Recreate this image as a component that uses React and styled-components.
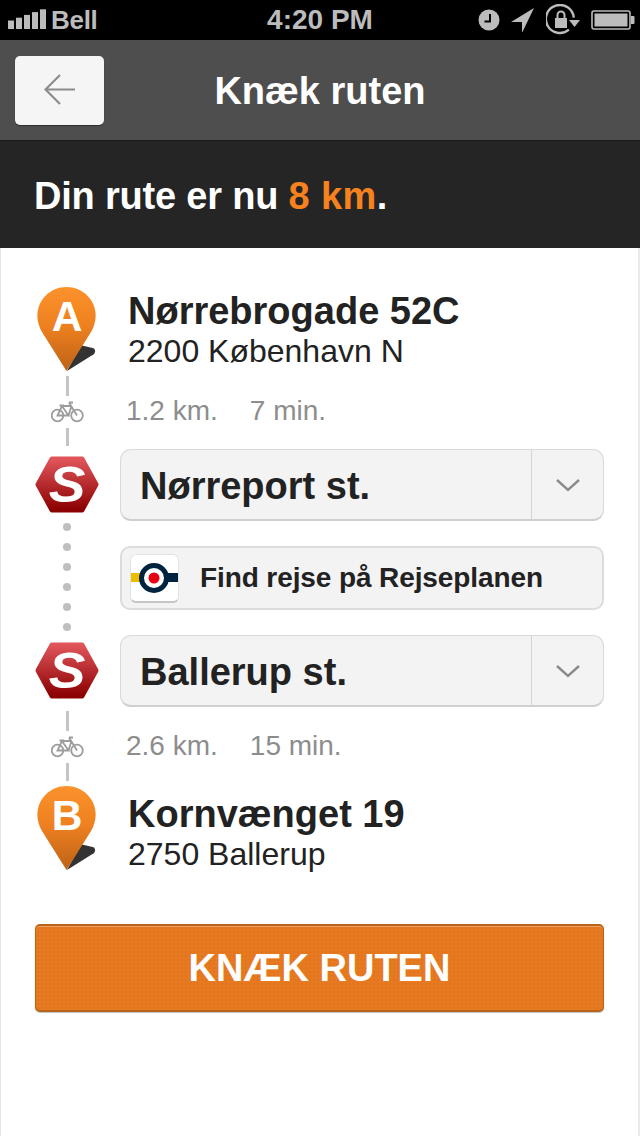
import React from "react";
import styled, { createGlobalStyle } from "styled-components";

const GlobalStyle = createGlobalStyle`
  html, body { margin: 0; padding: 0; background: #fff; }
  body { font-family: "Liberation Sans", Arial, sans-serif; }
  * { box-sizing: border-box; }
`;

const Page = styled.div`
  width: 640px;
  height: 1136px;
  overflow: hidden;
  display: flex;
  flex-direction: column;
`;

const StatusBar = styled.div`
  height: 40px;
  background: #000;
  color: #bcbcbc;
  display: grid;
  grid-template-columns: 1fr auto 1fr;
  align-items: center;
  padding: 0 5px;
`;
const Carrier = styled.div`
  display: flex;
  align-items: center;
  gap: 5px;
  padding-left: 3px;
  font-size: 26px;
  font-weight: bold;
  letter-spacing: -0.3px;
`;
const Clock = styled.div`
  font-size: 28px;
  font-weight: bold;
`;
const StatusIcons = styled.div`
  display: flex;
  justify-content: flex-end;
  align-items: center;
  gap: 11px;
`;

const NavBar = styled.div`
  height: 100px;
  background: #4e4e4e;
  display: grid;
  grid-template-columns: 1fr auto 1fr;
  align-items: center;
  padding: 0 15px;
`;
const BackButton = styled.div`
  width: 89px;
  height: 69px;
  border-radius: 5px;
  background: #f5f5f5;
  box-shadow: 0 1px 1px rgba(0, 0, 0, 0.4);
  display: flex;
  align-items: center;
  justify-content: center;
`;
const NavTitle = styled.div`
  color: #fff;
  font-size: 38px;
  font-weight: bold;
  padding-top: 3px;
`;

const Summary = styled.div`
  height: 108px;
  background: #252525;
  border-top: 1px solid #1b1b1b;
  color: #fff;
  font-size: 38px;
  font-weight: bold;
  letter-spacing: -0.2px;
  display: flex;
  align-items: center;
  padding: 4px 0 0 34px;
  white-space: pre;
`;
const Accent = styled.span`
  color: #f5821f;
  letter-spacing: 0.4px;
`;

const Route = styled.div`
  flex: 1;
  display: flex;
  flex-direction: column;
  padding: 39px 34px 0 34px;
  border-left: 1px solid #e6e6e6;
  border-right: 2px solid #e9e9e9;
`;
const Row = styled.div`
  display: flex;
  align-items: ${(p) => (p.$top ? "flex-start" : "center")};
  height: ${(p) => p.$height}px;
  margin-top: ${(p) => p.$mt || 0}px;
`;
const Rail = styled.div`
  width: 64px;
  flex: none;
  display: flex;
  flex-direction: column;
  align-items: center;
  align-self: stretch;
  justify-content: ${(p) => p.$justify || "center"};
  padding: ${(p) => p.$pad || 0};
  margin-right: 21px;
`;
const PinRail = styled(Rail)`
  margin-right: 29px;
`;
const Address = styled.div`
  color: #222;
  padding-top: ${(p) => p.$pt}px;
`;
const Street = styled.div`
  font-size: 38px;
  font-weight: bold;
  line-height: 42px;
`;
const City = styled.div`
  font-size: 32px;
  line-height: 38px;
`;
const Dash = styled.div`
  width: 3px;
  height: ${(p) => p.$h}px;
  background: #c4c4c4;
`;
const Stats = styled.div`
  display: flex;
  gap: 32px;
  color: #8d8d8d;
  font-size: 28px;
  padding-left: 6px;
`;
const Dot = styled.div`
  width: 8px;
  height: 8px;
  border-radius: 50%;
  background: #bfbfbf;
`;
const Select = styled.div`
  flex: 1;
  height: 100%;
  display: flex;
  border-radius: 11px;
  background: #f3f3f3;
  border: 1px solid #dadada;
  border-bottom: 2px solid #cfcfcf;
`;
const SelectLabel = styled.div`
  flex: 1;
  display: flex;
  align-items: center;
  padding: 3px 0 0 19px;
  color: #222;
  font-size: 38px;
  font-weight: bold;
`;
const SelectArrow = styled.div`
  width: 72px;
  border-left: 1px solid #d4d4d4;
  display: flex;
  align-items: center;
  justify-content: center;
`;
const PlanButton = styled.div`
  flex: 1;
  height: 64px;
  display: flex;
  align-items: center;
  gap: 21px;
  padding-left: 8px;
  border-radius: 10px;
  background: #f3f3f3;
  border: 2px solid #dcdcdc;
  color: #222;
  font-size: 28px;
  font-weight: bold;
  letter-spacing: -0.1px;
`;
const PlanIcon = styled.div`
  width: 49px;
  height: 49px;
  border-radius: 6px;
  background: #fff;
  border: 1px solid #e2e2e2;
  border-bottom: 2px solid #c6c6c6;
  overflow: hidden;
  flex: none;
`;
const SubmitButton = styled.div`
  height: 88px;
  margin-top: 53px;
  border-radius: 5px;
  border: 1px solid #b8651a;
  border-top: 2px solid #b8651a;
  border-bottom: 2px solid #b8651a;
  color: #fff;
  font-size: 38px;
  font-weight: bold;
  display: flex;
  align-items: center;
  justify-content: center;
  box-shadow: inset 0 1px 0 rgba(255, 255, 255, 0.3), 0 1px 1px rgba(0, 0, 0, 0.25);
  background-color: #e77a20;
  background-image: radial-gradient(rgba(160, 80, 10, 0.12) 1px, transparent 1px);
  background-size: 4px 4px;
`;

const Signal = () => (
  <svg width="38" height="22" viewBox="0 0 38 22">
    {[0, 8, 16, 24, 32].map((x, i) => (
      <rect key={x} x={x} y={11.5 - i * 2.8} width="6" height={8.5 + i * 2.8} fill="#bcbcbc" />
    ))}
  </svg>
);

const AlarmIcon = () => (
  <svg width="22" height="22" viewBox="0 0 22 22">
    <circle cx="11" cy="11" r="10.5" fill="#bcbcbc" />
    <path d="M12 5v7.5H6.5" fill="none" stroke="#000" strokeWidth="2" />
  </svg>
);
const LocationIcon = () => (
  <svg width="24" height="24" viewBox="0 0 24 24">
    <path d="M23 0 L0 14 L11 14 L11 25 Z" fill="#bcbcbc" />
  </svg>
);
const RotationIcon = () => (
  <svg width="34" height="32" viewBox="0 0 34 32">
    <path d="M26 22 A14 14 0 1 1 26 9" fill="none" stroke="#bcbcbc" strokeWidth="2.4" transform="rotate(22 15 16)" />
    <path d="M23 16 H34 L28.500 23 Z" fill="#bcbcbc" />
    <rect x="9" y="14" width="12" height="10" fill="#bcbcbc" />
    <path d="M11.500 14 V11 a3.500 3.500 0 0 1 7 0 V14" fill="none" stroke="#bcbcbc" strokeWidth="2" />
  </svg>
);
const BatteryIcon = () => (
  <svg width="44" height="20" viewBox="0 0 44 20">
    <rect x="1" y="1" width="38" height="18" rx="2" fill="none" stroke="#bcbcbc" strokeWidth="1.600" />
    <rect x="3.500" y="3.500" width="33" height="13" fill="#bcbcbc" />
    <path d="M40 6h2.500a1 1 0 0 1 1 1v6a1 1 0 0 1-1 1H40z" fill="#bcbcbc" />
  </svg>
);

const BackArrow = () => (
  <svg width="32" height="32" viewBox="0 0 32 32">
    <path d="M31 15.500H2M16 1 1.500 15.500 16 30" fill="none" stroke="#8c8c8c" strokeWidth="2.200" />
  </svg>
);

const Pin = ({ letter, id }) => (
  <svg width="60" height="86" viewBox="0 0 60 86">
    <defs>
      <linearGradient id={id} x1="0" y1="0" x2="0" y2="1">
        <stop offset="0" stopColor="#fb922c" />
        <stop offset="0.45" stopColor="#ef8120" />
        <stop offset="1" stopColor="#bd6216" />
      </linearGradient>
    </defs>
    <path d="M30 85 L44 59 L57 62 C59 64 59 66 57 68 Z" fill="#333" />
    <path
      d="M29.500 0 C13 0 0 13 0 29 C0 35 2 41 5 46 L29.500 85 L54 46 C57 41 59 35 59 29 C59 13 46 0 29.500 0 Z"
      fill={`url(#${id})`}
    />
    <text
      x="30"
      y="45"
      textAnchor="middle"
      fontFamily="Liberation Sans, Arial, sans-serif"
      fontWeight="bold"
      fontSize="43"
      fill="#fff"
    >
      {letter}
    </text>
  </svg>
);

const TrainBadge = ({ id }) => (
  <svg width="64" height="58" viewBox="0 0 64 58">
    <defs>
      <linearGradient id={id} x1="0" y1="0" x2="0" y2="1">
        <stop offset="0" stopColor="#e0555a" />
        <stop offset="1" stopColor="#8b0000" />
      </linearGradient>
    </defs>
    <path
      d="M17 3 H47 L61 28.500 L47 54 H17 L3 28.500 Z"
      fill={`url(#${id})`}
      stroke={`url(#${id})`}
      strokeWidth="5"
      strokeLinejoin="round"
    />
    <text
      x="32"
      y="46"
      textAnchor="middle"
      fontFamily="Liberation Sans, Arial, sans-serif"
      fontWeight="bold"
      fontStyle="italic"
      fontSize="50"
      fill="#fff"
      transform="translate(-3.200 0) scale(1.100 1)"
    >
      S
    </text>
  </svg>
);

const Bike = () => (
  <svg width="33" height="22" viewBox="0 0 33 22" fill="none" stroke="#9c9c9c" strokeWidth="1.800">
    <circle cx="6.500" cy="14.500" r="5.800" />
    <circle cx="26" cy="14.500" r="5.800" />
    <path d="M11 5 L17.500 14.500 H6.500 L11 5 H20.500 M18 1.500 L26 14.500 M20.500 5 L17.500 14.500 M8.500 4.500 H13 M18 1.500 H22" />
  </svg>
);

const Chevron = () => (
  <svg width="24" height="14" viewBox="0 0 24 14">
    <path d="M1 2 L12 12 L23 2" fill="none" stroke="#8a8a8a" strokeWidth="2.400" />
  </svg>
);

const PlanLogo = () => (
  <svg width="47" height="46" viewBox="0 0 47 46">
    <rect x="-1" y="18" width="12" height="9" fill="#ecbd00" />
    <rect x="34" y="18" width="14" height="9" fill="#00233f" />
    <circle cx="23" cy="23" r="12.500" fill="#fff" stroke="#00233f" strokeWidth="5" />
    <circle cx="23" cy="23" r="5.500" fill="#e60012" />
  </svg>
);

const Leg = ({ distance, minutes, mt }) => (
  <Row $height={70} $mt={mt}>
    <Rail $justify="space-between">
      <Dash $h={20} />
      <Bike />
      <Dash $h={18} />
    </Rail>
    <Stats>
      <span>{distance}</span>
      <span>{minutes}</span>
    </Stats>
  </Row>
);

const Stop = ({ letter, street, city, mt, textTop }) => (
  <Row $top $height={85} $mt={mt}>
    <PinRail>
      <Pin letter={letter} id={`pin-${letter}`} />
    </PinRail>
    <Address $pt={textTop}>
      <Street>{street}</Street>
      <City>{city}</City>
    </Address>
  </Row>
);

const Station = ({ name, id, mt }) => (
  <Row $height={72} $mt={mt}>
    <Rail>
      <TrainBadge id={id} />
    </Rail>
    <Select>
      <SelectLabel>{name}</SelectLabel>
      <SelectArrow>
        <Chevron />
      </SelectArrow>
    </Select>
  </Row>
);

const App = () => {
  return (
    <Page>
      <GlobalStyle />
      <StatusBar>
        <Carrier>
          <Signal />
          Bell
        </Carrier>
        <Clock>4:20 PM</Clock>
        <StatusIcons>
          <AlarmIcon />
          <LocationIcon />
          <RotationIcon />
          <BatteryIcon />
        </StatusIcons>
      </StatusBar>
      <NavBar>
        <BackButton>
          <BackArrow />
        </BackButton>
        <NavTitle>Knæk ruten</NavTitle>
      </NavBar>
      <Summary>
        Din rute er nu <Accent>8 km</Accent>.
      </Summary>
      <Route>
        <Stop letter="A" street="Nørrebrogade 52C" city="2200 København N" textTop={3} />
        <Leg distance="1.2 km." minutes="7 min." mt={4} />
        <Station name="Nørreport st." id="train-a" mt={3} />
        <Row $height={114}>
          <Rail $justify="space-between" $pad="2px 0 4px">
            <Dot />
            <Dot />
            <Dot />
            <Dot />
            <Dot />
            <Dot />
          </Rail>
          <PlanButton>
            <PlanIcon>
              <PlanLogo />
            </PlanIcon>
            Find rejse på Rejseplanen
          </PlanButton>
        </Row>
        <Station name="Ballerup st." id="train-b" />
        <Leg distance="2.6 km." minutes="15 min." mt={4} />
        <Stop letter="B" street="Kornvænget 19" city="2750 Ballerup" mt={5} textTop={7} />
        <SubmitButton>KNÆK RUTEN</SubmitButton>
      </Route>
    </Page>
  );
};

export default App;
